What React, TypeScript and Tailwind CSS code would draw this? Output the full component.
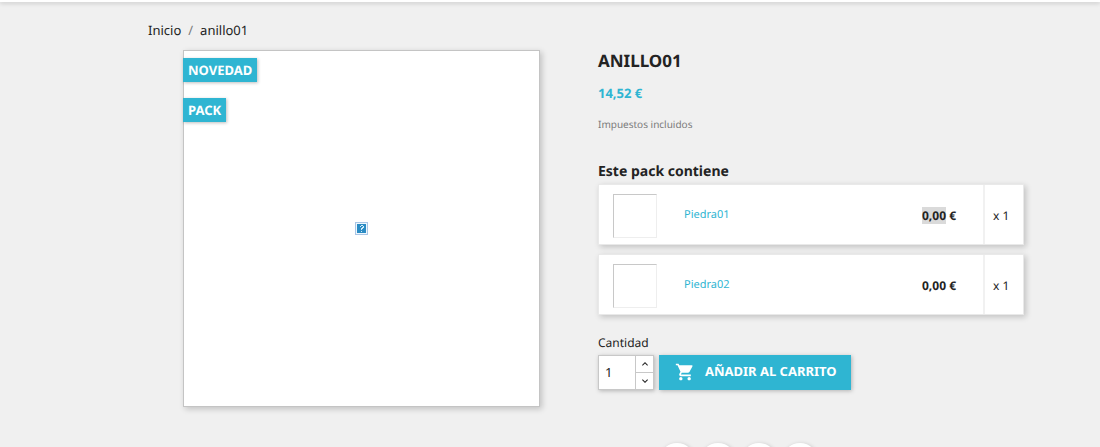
import React, { useState } from 'react';
import { MdShoppingCart, MdKeyboardArrowUp, MdKeyboardArrowDown } from 'react-icons/md';

interface PackItem {
  name: string;
  amount: string;
  quantity: number;
  selected?: boolean;
}

const packItems: PackItem[] = [
  { name: 'Piedra01', amount: '0,00', quantity: 1, selected: true },
  { name: 'Piedra02', amount: '0,00', quantity: 1 },
];

const flags = ['Novedad', 'Pack'];

const shareLinks = ['Compartir', 'Tuitear', 'Google+', 'Pinterest'];

const Breadcrumb: React.FC = () => (
  <nav aria-label="Breadcrumb" className="flex gap-[7px] pt-[18px] text-[13px] leading-5">
    <a href="#inicio">Inicio</a>
    <span className="text-[#7a7a7a]">/</span>
    <a href="#anillo01">anillo01</a>
  </nav>
);

const MissingImage: React.FC = () => (
  <svg viewBox="0 0 13 13" className="h-[13px] w-[13px]" role="img" aria-label="anillo01">
    <rect width="13" height="13" fill="#a9c6e6" />
    <rect x="1" y="1" width="11" height="11" fill="#eef7fd" />
    <rect x="2" y="2" width="9" height="9" fill="#2b8cc4" />
    <path d="M5 5V4h1V3h2v1h1v2H8v1H7v1H6V6h1V5h1V4H6v1zM6 9h1v1H6z" fill="#d3ecf8" />
  </svg>
);

const ProductCover: React.FC = () => (
  <div className="relative flex aspect-square w-[357px] shrink-0 items-center justify-center self-start border border-[#c4c4c4] bg-white shadow-[2px_2px_6px_rgba(0,0,0,0.2)]">
    <MissingImage />
    <ul className="absolute -left-px top-[7px] flex flex-col items-start gap-4">
      {flags.map((flag) => (
        <li
          key={flag}
          className="bg-[#2fb5d2] px-[5px] text-[13px] font-bold uppercase leading-6 text-white shadow-[1px_1px_3px_rgba(0,0,0,0.25)]"
        >
          {flag}
        </li>
      ))}
    </ul>
  </div>
);

const PackRow: React.FC<{ item: PackItem }> = ({ item }) => (
  <article className="flex h-[61px] items-stretch border border-[#e9e9e9] bg-white text-xs shadow-[2px_2px_6px_rgba(0,0,0,0.2)]">
    <div className="flex flex-1 items-center pl-[14px] pr-[27px] pt-[2px]">
      <div className="h-11 w-11 shrink-0 border border-b-[#eeeeee] border-l-[#c8c8c8] border-r-[#eeeeee] border-t-[#c8c8c8]" />
      <a href={`#${item.name}`} className="ml-[27px] flex-1 text-[11px] text-[#2fb5d2]">
        {item.name}
      </a>
      <strong className="font-bold">
        <span className={item.selected ? 'bg-[#dadada]' : ''}>{item.amount}</span> €
      </strong>
    </div>
    <div className="flex w-10 items-center border-l-2 border-[#f1f1f1] pl-2 pt-[2px]">x {item.quantity}</div>
  </article>
);

const AddToCart: React.FC = () => {
  const [quantity, setQuantity] = useState(1);

  return (
    <form className="mt-[18px]" onSubmit={(e) => e.preventDefault()}>
      <label htmlFor="quantity" className="block text-xs leading-5">
        Cantidad
      </label>
      <div className="mt-[2px] flex gap-[5px]">
        <div className="flex h-[35px] border border-[#c8c8c8] bg-white shadow-[1px_1px_4px_rgba(0,0,0,0.25)]">
          <input
            id="quantity"
            type="text"
            value={quantity}
            onChange={(e) => setQuantity(Number(e.target.value) || 1)}
            className="w-9 pl-[6px] text-[13px] outline-none"
          />
          <div className="flex w-[18px] flex-col border-l border-[#c8c8c8]">
            <button
              type="button"
              aria-label="Aumentar"
              onClick={() => setQuantity(quantity + 1)}
              className="flex flex-1 items-center justify-center border-b border-[#c8c8c8]"
            >
              <MdKeyboardArrowUp className="h-3 w-3" />
            </button>
            <button
              type="button"
              aria-label="Reducir"
              onClick={() => setQuantity(Math.max(1, quantity - 1))}
              className="flex flex-1 items-center justify-center"
            >
              <MdKeyboardArrowDown className="h-3 w-3" />
            </button>
          </div>
        </div>
        <button
          type="submit"
          className="flex h-[35px] items-center gap-[10px] bg-[#2fb5d2] pb-[2px] pl-4 pr-[14px] text-[13px] font-bold uppercase text-white shadow-[1px_1px_4px_rgba(0,0,0,0.25)]"
        >
          <MdShoppingCart className="h-5 w-5" />
          Añadir al carrito
        </button>
      </div>
    </form>
  );
};

const ProductInfo: React.FC = () => (
  <section className="min-w-0 flex-1">
    <h1 className="text-[17px] font-bold uppercase leading-[22px]">anillo01</h1>
    <p className="mt-[11px] text-[13px] font-bold leading-5 text-[#2fb5d2]">14,52 €</p>
    <p className="mt-[11px] text-[10px] leading-5 text-[#7a7a7a]">Impuestos incluidos</p>

    <h2 className="mt-[26px] text-[14px] font-bold leading-6">Este pack contiene</h2>
    <div className="flex flex-col gap-[9px]">
      {packItems.map((item) => (
        <PackRow key={item.name} item={item} />
      ))}
    </div>

    <AddToCart />

    <ul className="ml-[61px] mt-[53px] flex gap-[5px]">
      {shareLinks.map((label) => (
        <li key={label}>
          <a
            href="#compartir"
            aria-label={label}
            className="block h-9 w-9 rounded-full bg-white shadow-[1px_1px_4px_rgba(0,0,0,0.2)]"
          />
        </li>
      ))}
    </ul>
  </section>
);

const App: React.FC = () => {
  return (
    <div className="h-screen overflow-hidden bg-[#f0f0f0] font-['Noto_Sans',sans-serif] text-[#232323] [text-rendering:geometricPrecision]">
      <header className="h-[2px] bg-white shadow-[0_1px_4px_rgba(0,0,0,0.25)]" />
      <main className="ml-[148px] mr-[76px] max-w-[1000px]">
        <Breadcrumb />
        <div className="mt-[10px] flex gap-[58px] pl-[35px]">
          <ProductCover />
          <ProductInfo />
        </div>
      </main>
    </div>
  );
};

export default App;
